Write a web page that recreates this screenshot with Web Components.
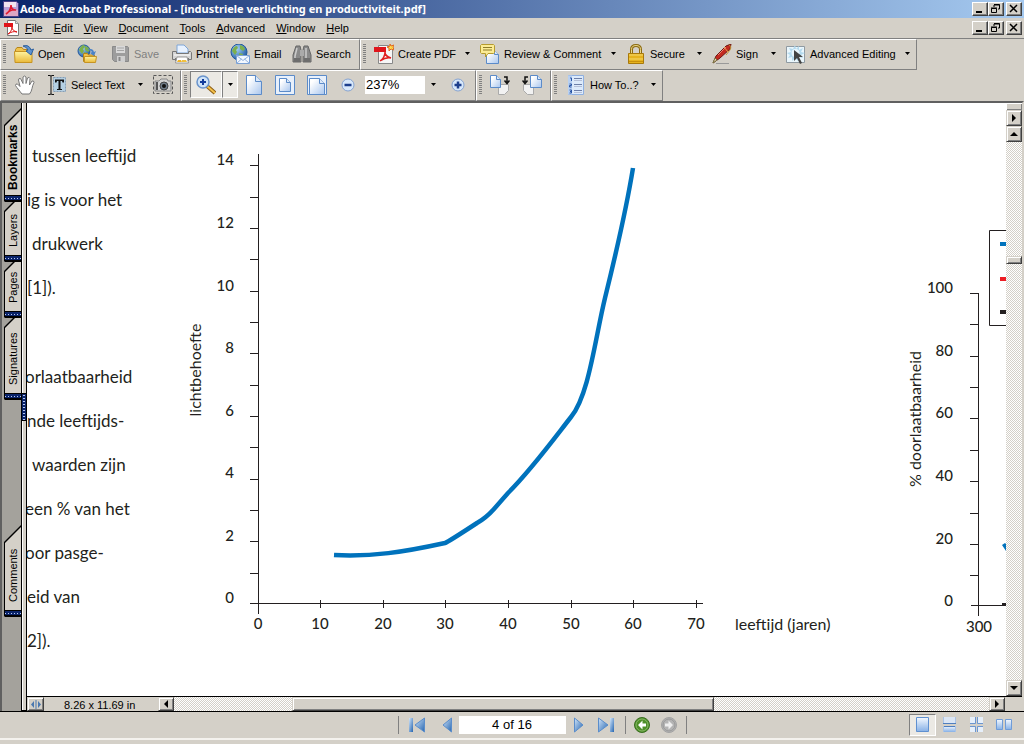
<!DOCTYPE html>
<html lang="en">
<head>
<meta charset="utf-8">
<title>Adobe Acrobat Professional - [industriele verlichting en productiviteit.pdf]</title>
<style>
html,body{margin:0;height:100%}
body{background:#d4d0c8;color:#000;font:11px/14px "Liberation Sans",Arial,sans-serif;overflow:hidden}
</style>
</head>
<body>
<acrobat-window></acrobat-window>
<script>
const define=(name,html,setup)=>customElements.define(name,class extends HTMLElement{
  connectedCallback(){
    if(this.shadowRoot)return;
    const root=this.attachShadow({mode:'open'});
    root.innerHTML=typeof html==='function'?html(this):html;
    if(setup)setup(this,root);
  }
});

/* ---------- icons ---------- */
const grads=`<defs>
<linearGradient id="pg" x1="0" y1="0" x2="1" y2="1"><stop offset=".2" stop-color="#fff"/><stop offset="1" stop-color="#a9c6ee"/></linearGradient>
<linearGradient id="bl" x1="0" y1="0" x2="1" y2="1"><stop offset="0" stop-color="#d3e6fa"/><stop offset="1" stop-color="#2565b0"/></linearGradient>
<linearGradient id="lb" x1="0" y1="0" x2="0" y2="1"><stop offset="0" stop-color="#f4f9ff"/><stop offset="1" stop-color="#86b0e6"/></linearGradient>
<linearGradient id="yl" x1="0" y1="0" x2="0" y2="1"><stop offset="0" stop-color="#fff3a0"/><stop offset="1" stop-color="#e9b93a"/></linearGradient>
<radialGradient id="gl" cx=".35" cy=".3" r=".8"><stop offset="0" stop-color="#a8d4f5"/><stop offset="1" stop-color="#14509c"/></radialGradient>
</defs>`;
const page=(x,y,w,h,f)=>`<path d="M${x} ${y}h${w-f}l${f} ${f}v${h-f}h${-w}z" fill="url(#pg)" stroke="#5b8bc9"/><path d="M${x+w-f} ${y}v${f}h${f}" fill="#dbe8f8" stroke="#5b8bc9"/>`;
const globe=(x,y,r)=>`<circle cx="${x}" cy="${y}" r="${r}" fill="url(#gl)" stroke="#22599c"/><path d="M${x-r+1} ${y-1}q2-5 5-5l1 2-2 2 1 2-2 3zM${x+1} ${y-r+1}q4 1 5 4l-2 2-3-2zM${x} ${y+1}l4 1-1 4-2 1z" fill="#7db04c"/>`;
const svgs={
app:[16,16,`<path d="M.5.5h13l2 2v13H.5z" fill="#b9a0d8" stroke="#4a3f86"/><path d="M1 1h12v5H1z" fill="#f2e4f0"/><path d="M1 9h14v6H1z" fill="#dda6c4"/><path d="M3 13c3-2 5-5 5-9 0 4 2 5 5 5-3-1-7 1-10 4z" fill="none" stroke="#e01a30" stroke-width="1.600"/>`],
pdf:[16,16,`<path d="M3.500.5h8l3 3v12h-11z" fill="#fff" stroke="#777"/><path d="M11.500.5v3h3" fill="#ddd" stroke="#999"/><path d="M0 3h9v4H0z" fill="#e0141a"/><path d="M4 14c2-1 4-4 4-7 0 3 2 4 5 5-3-1-6 0-9 2z" fill="none" stroke="#d11"/>`],
open:[20,20,`<path d="M1.500 16.500v-11l1.500-2h5l1.500 2h7v11z" fill="#f0c24c" stroke="#b58519"/><path d="M.5 7.500h17.500v11h-17z" fill="url(#yl)" stroke="#c79423"/><path d="M9 2q6-2 8 4l2.500-1-2.500 6-5-4 2-1q-1-3-5-4z" fill="#5f93cf" stroke="#2c5f9f"/>`],
web:[20,20,`${globe(7,7,6)}<path d="M6.500 17.500v-8h4l1 1.500h6v6.500z" fill="#f0c24c" stroke="#b58519"/><path d="M7.500 12.500h12l-1 6h-11z" fill="url(#yl)" stroke="#c79423"/><path d="M10 5q6-1 7 3l2-1-2 5-4-3 2-1q-1-2-5-3z" fill="#4b82c6"/>`],
save:[20,20,`<path d="M2.500 2.500h15l1 1v14h-14l-2-2z" fill="#9d9d9d" stroke="#8a8a8a"/><path d="M6 2h9v7H6z" fill="#d9d9d9"/><path d="M7 4h7M7 6.500h7" stroke="#a5a5a5"/><path d="M7 12h8v6H7z" fill="#cfcfcf"/><path d="M8.500 13h2v4h-2z" fill="#888"/>`],
print:[20,20,`<path d="M5 9V1h7l4 4v4z" fill="#e8f2ff" stroke="#7ea6d8"/><path d="M.5 7.500h4v2h12v-2h2l1 1v7h-19z" fill="#d5d5d5" stroke="#777"/><path d="M2 11h16" stroke="#fff"/><path d="M3 14h14v3H3z" fill="#777"/><path d="M5 13h10l1.500 6H3.500z" fill="#fff" stroke="#999"/><path d="M6 16h3l1 2H5z" fill="#f0b429"/><path d="M10 16h4l1 2h-5z" fill="#f0c040"/>`],
mail:[20,20,`${globe(9,8,8)}<path d="M6.500 11.500h13v8h-13z" fill="#f3f8ff" stroke="#7aa0d4"/><path d="M6.500 11.500l6.500 5 6.500-5M6.500 19.500l5-4.500M19.500 19.500l-5-4.500" fill="none" stroke="#8fb0de"/>`],
find:[20,20,`<path d="M4 2h4l1 4v12H1V11zM12 2h4l3 9v7h-8V6z" fill="#8a8a8a" stroke="#666"/><path d="M8 6h4v6H8z" fill="#aaa"/><path d="M5 4l-2 8v4M14 4v10" stroke="#ccc" fill="none" stroke-width="1.500"/><path d="M2 14h6v4H2zM12 14h6v4h-6z" fill="#6d6d6d"/>`],
create:[20,20,`<path d="M4.500 1.500h10l4 4v14h-14z" fill="#f6f6f6" stroke="#888"/><path d="M0 3h12v5H0z" fill="#df161c"/><path d="M6 17c3-2 5-5 5-9 0 4 3 5 6 6-4-1-8 1-11 3z" fill="none" stroke="#e02020" stroke-width="1.500"/><path d="M16 0l1 2 3-1-1 2 1 3-3-1-2 2v-3l-2-1 3-1z" fill="#ffd94a" stroke="#e06a20"/>`],
review:[20,20,`${page(6.5,6.5,12,13,4)}<path d="M1.500.5h12l1 1v7l-1 1H8L5.500 13V9.500h-4l-1-1v-7z" fill="#fcec94" stroke="#b59b2f"/><path d="M3 3.500h9M3 6h9" stroke="#8f7d2a"/>`],
lock:[20,20,`<path d="M5.500 10V5.500q0-4 4.500-4t4.500 4V10" fill="none" stroke="#8d6b10" stroke-width="3"/><path d="M5.500 10V5.500q0-4 4.500-4t4.500 4V10" fill="none" stroke="#e9d68a"/><path d="M2.500 9.500h15v10h-15z" fill="#e6b31e" stroke="#a8790b"/><path d="M3 11h14M3 15h14" stroke="#f6da6c"/><path d="M3 17.500h14" stroke="#c7900d"/>`],
sign:[20,20,`<path d="M4 19.500h13" stroke="#999"/><path d="M1 19l3-7L14 2l5-2-1 5L8 14z" fill="#c32a20" stroke="#6d1812"/><path d="M1 19l2-5 2 2z" fill="#f0d9b8" stroke="#774"/><path d="M12 3l4 5" stroke="#e3a64a"/><path d="M14 3l-8 8" stroke="#f08070"/><path d="M17 1q3 1 1 5l-4 5" fill="none" stroke="#c38f33"/>`],
adv:[20,20,`<path d="M.5 2.500h18v16H.5z" fill="#eaf6fc" stroke="#8f9aa2"/><path d="M9 1l1 4 3-3v4l4-2-2 4 4 1-4 2 2 3-4-1-1 4-3-3-3 3v-4l-4 1 2-3-3-2 4-1-2-4 4 1z" fill="#b4daee"/><circle cx="9.500" cy="9" r="4" fill="#eaf6fc"/><path d="M8 6v11l3-3 3 6 2-1-3-6h4z" fill="#444"/>`],
hand:[20,20,`<path d="M7 19C4 15 2 13 .5 10.500q0-2 2-1.500L5 11.500 3.500 5q0-2 2-1.500L8 8.500V2q1.500-2 3 0v6.500L12.500 3q2-1.500 2.500.5L14.500 10 17 6q2-.5 2 1.500-1.500 3-2 6-.5 3-2.500 5.500z" fill="#fff" stroke="#777"/>`],
text:[20,20,`<path d="M6 2h13v15H6z" fill="#b4cfe2"/><path d="M6.500 2.500h12v14h-12z" fill="none" stroke="#8a9db0" stroke-dasharray="2 1"/><path d="M1 .5h2q1 0 1 1 0-1 1-1h2M4 1.500v17M1 19.500h2q1 0 1-1 0 1 1 1h2" fill="none" stroke="#111"/><path d="M8 4.500h9v3h-1.500l-.5-1.500h-1.500V14H15v1h-5v-1h1.500V6H10l-.5 1.500H8z" fill="#111"/>`],
snap:[20,20,`<path d="M.5.5h19v18H.5z" fill="none" stroke="#555" stroke-dasharray="3 2"/><path d="M2 6h4l2-2h6l1 2h3v10H2z" fill="#d2d2d2" stroke="#888"/><circle cx="11" cy="11" r="4" fill="#6e7b88" stroke="#444"/><circle cx="11" cy="11" r="2" fill="#111"/><path d="M3 7h2v8H3z" fill="#555"/>`],
zoom:[20,20,`<path d="M11 11l8 7" stroke="#8a5a10" stroke-width="4"/><path d="M11 11l8 7" stroke="#f3c04a" stroke-width="2"/><circle cx="7" cy="7" r="6" fill="#cfe3f8" stroke="#6a94cc" stroke-width="1.500"/><path d="M4 7h6M7 4v6" stroke="#123c9c" stroke-width="2"/>`],
actual:[20,20,page(2.5,.5,15,19,6)],
fitpage:[20,20,`<path d="M.5.5h19v19H.5z" fill="#e8f0fb" stroke="#5b8bc9"/>${page(4.5,3.5,11,13,4)}`],
fitwidth:[20,20,`<path d="M.5.5h19v19H.5z" fill="#e8f0fb" stroke="#5b8bc9"/>${page(2.5,3.5,15,16,5)}`],
minus:[14,14,`<circle cx="7" cy="7" r="6" fill="#d8e9fb" stroke="#86a3d0"/><path d="M3.500 7h7" stroke="#1d3f8d" stroke-width="2.500"/>`],
plus:[14,14,`<circle cx="7" cy="7" r="6" fill="#d8e9fb" stroke="#86a3d0"/><path d="M3.500 7h7M7 3.500v7" stroke="#1d3f8d" stroke-width="2.500"/>`],
rotr:[20,20,`<path d="M8.500 9.500h10v6l-4 4h-6z" fill="#f2f2f2" stroke="#aaa"/>${page(.5,.5,10,12,4)}<path d="M14 2h3v5M14.500 5.500l2.500 3 2.500-3" fill="none" stroke="#111" stroke-width="1.500"/>`],
rotl:[20,20,`<path d="M1.500 9.500h10v10h-6l-4-4z" fill="#f2f2f2" stroke="#aaa"/>${page(8.5,.5,11,12,4)}<path d="M6 2H3v5M.5 5.500l2.500 3 2.500-3" fill="none" stroke="#111" stroke-width="1.500"/>`],
howto:[20,20,`<path d="M2.500.5h15v19h-15z" fill="#dceafb" stroke="#8fb0e0"/><path d="M2 .5h4v19H2z" fill="#b7d0f2"/><path d="M8 3.500h8M8 9.500h8M8 15.500h8" stroke="#6d7ea8"/><path d="M8 5.500h8M8 11.500h8M8 17.500h8" stroke="#b5bfd8"/><path d="M4 3h1.500v3M3.500 9h2v1.500h-2V12h2M3.500 15h2v3h-2M4 16.500h1" fill="none" stroke="#2a55a5"/>`],
first:[16,16,`<path d="M0 1h4v14H0z" fill="url(#bl)"/><path d="M15.500 1v14L6 8z" fill="url(#bl)" stroke="#5a8dcb"/>`],
prev:[16,16,`<path d="M12.500 1v14L4 8z" fill="url(#bl)" stroke="#5a8dcb"/>`],
next:[16,16,`<path d="M3.500 1v14L12 8z" fill="url(#bl)" stroke="#5a8dcb"/>`],
last:[16,16,`<path d="M12 1h4v14h-4z" fill="url(#bl)"/><path d="M.5 1v14L10 8z" fill="url(#bl)" stroke="#5a8dcb"/>`],
back:[16,16,`<circle cx="8" cy="8" r="7.500" fill="#4f8f2a" stroke="#3a6f20"/><circle cx="8" cy="8" r="6" fill="none" stroke="#86b766"/><path d="M8.500 3.500L4 8l4.500 4.500V9.500H12v-3H8.500z" fill="#fff"/>`],
fwd:[16,16,`<circle cx="8" cy="8" r="7.500" fill="#b4b4b4" stroke="#a2a2a2"/><circle cx="8" cy="8" r="6" fill="none" stroke="#999"/><path d="M7.500 3.500L12 8l-4.500 4.500V9.500H4v-3h3.500z" fill="#eee"/>`],
single:[16,16,`<path d="M1.500.5h12v14h-12z" fill="url(#lb)" stroke="#5f90d0"/>`],
cont:[16,16,`<path d="M1 0h13v6H1z" fill="#dbe6f5"/><path d="M1 9h13v6H1z" fill="url(#lb)"/><path d="M1 6.500h13M1 9.500h13" stroke="#4f7fc0"/><path d="M1.500 0v6M13.500 0v6M1.500 9v6M13.500 9v6" stroke="#a9c3e6"/>`],
contf:[16,16,`<path d="M1 0h5v6H1zM9 0h5v6H9zM1 9h5v6H1zM9 9h5v6H9z" fill="#e6effa"/><path d="M1 6.500h5.500V0M14 6.500H8.500V0M1 9.500h5.500V15M14 9.500H8.500V15" fill="none" stroke="#6b96d0"/>`],
facing:[16,16,`<path d="M.5 2.500h6v10h-6zM9.500 2.500h6v10h-6z" fill="url(#lb)" stroke="#6f9cd8"/>`],
split:[16,13,`<path d="M8 2v9" stroke="#4a78b0"/><path d="M6 3v7L3 6.500zM10 3v7l3-3.500z" fill="#4a78b0"/>`],
left:[8,8,`<path d="M6 0v8L2 4z"/>`],right:[8,8,`<path d="M2 0v8l4-4z"/>`],
up:[8,8,`<path d="M0 6h8L4 2z"/>`],down:[8,8,`<path d="M0 2h8L4 6z"/>`],
caret:[7,4,`<path d="M1 0h5L3.500 3z"/>`],
min:[12,10,`<path d="M2 7h6v2H2z"/>`],
rest:[12,10,`<path d="M4 .5h5.500V5H8M4 1h5.500M4 1v2M1.500 4.500h5v4h-5zM1 4h6" fill="none" stroke="#000"/>`],
close:[12,10,`<path d="M2 1l7 7M9 1l-7 7" stroke="#000" stroke-width="1.500"/>`]
};
define('ui-icon',el=>{const[w,h,s]=svgs[el.getAttribute('name')];
  return `<style>:host{display:block;flex:none}svg{display:block}</style><svg width="${w}" height="${h}" viewBox="0 0 ${w} ${h}" aria-hidden="true">${s.includes('url(')?grads:''}${s}</svg>`});

/* ---------- title and menu ---------- */
define('caption-buttons',`<style>:host{display:flex}
button{width:16px;height:14px;padding:0;margin:0;border:1px solid;border-color:#fff #404040 #404040 #fff;box-shadow:inset -1px -1px #808080;background:#d4d0c8;display:flex;align-items:center;justify-content:center}
button:last-child{margin-left:2px}</style>
<button aria-label="Minimize"><ui-icon name="min"></ui-icon></button><button aria-label="Restore"><ui-icon name="rest"></ui-icon></button><button aria-label="Close"><ui-icon name="close"></ui-icon></button>`);

define('title-bar',`<style>:host{display:flex;align-items:center;height:18px;padding:0 2px 0 3px;background:linear-gradient(90deg,#0a246a,#a6caf0);color:#fff;font:bold 11px/18px "Noto Sans",sans-serif;white-space:nowrap}
span{flex:1;padding-left:1px}</style><ui-icon name="app"></ui-icon><span><slot></slot></span><caption-buttons></caption-buttons>`);

define('menu-bar',`<style>:host{display:flex;align-items:center;height:20px;padding:0 2px 0 4px}
nav{flex:1;display:flex}
button{border:0;background:none;padding:0 6px 0 5px;margin:0;font:inherit;color:inherit;line-height:20px}</style>
<ui-icon name="pdf"></ui-icon><nav>${['File','Edit','View','Document','Tools','Advanced','Window','Help'].map(t=>`<button><u>${t[0]}</u>${t.slice(1)}</button>`).join('')}</nav><caption-buttons></caption-buttons>`);

/* ---------- toolbars ---------- */
define('tool-band',`<style>:host{display:grid;box-sizing:border-box;height:31px;align-items:center;border:solid;border-width:1px;border-color:#fff #808080 #808080 #fff;grid-template-rows:27px}
i{width:3px;height:19px;margin-left:2px;background:repeating-linear-gradient(#808080 0 1px,transparent 1px 2px)}</style><i></i><slot></slot>`);

define('tool-button',el=>`<style>:host{display:block;height:100%}
button{box-sizing:border-box;width:100%;height:100%;display:flex;align-items:center;gap:4px;padding:0;margin:0;border:0;background:none;font:inherit;color:inherit;white-space:nowrap}
:host([disabled]) button{color:#808080}
:host([pressed]) button{background:#ebe9e4;border:1px solid;border-color:#808080 #fff #fff #808080;justify-content:center}
.caret{margin-left:auto;margin-right:var(--caret-end,9px)}
:host([pressed]) .caret{margin:0}</style>
<button ${el.hasAttribute('disabled')?'disabled':''} aria-label="${el.getAttribute('label')||el.textContent}">${el.getAttribute('icon')?`<ui-icon name="${el.getAttribute('icon')}"></ui-icon>`:''}${el.textContent?'<slot></slot>':''}${el.hasAttribute('menu')?'<ui-icon class="caret" name="caret"></ui-icon>':''}</button>`);

define('tool-area',`<style>:host{display:block;border-top:1px solid #808080;font-size:11px}
.row{display:flex;height:31px}
.files{grid-template-columns:13px 63px 33px 62px 58px 62px 67px}
.tasks{grid-template-columns:13px 106px 146px 86px 74px 130px}
.basic{grid-template-columns:14px 32px 106px 27px}
.zoom{grid-template-columns:8px 32px 16px 6px 31px 32px 34px 24px 60px 18px 32px}
.rotate{grid-template-columns:13px 32px 28px}
.help{grid-template-columns:14px 96px}
.help tool-button,.last{--caret-end:5px}
input{box-sizing:border-box;width:60px;height:18px;border:0;padding:0 1px;margin:0;font:13px/18px "Liberation Sans",sans-serif;background:#fff}
</style>
<div class="row"><tool-band class="files">
<tool-button icon="open">Open</tool-button><tool-button icon="web" label="Open web page"></tool-button><tool-button icon="save" disabled>Save</tool-button><tool-button icon="print">Print</tool-button><tool-button icon="mail">Email</tool-button><tool-button icon="find">Search</tool-button></tool-band>
<tool-band class="tasks"><tool-button icon="create" menu>Create PDF</tool-button><tool-button icon="review" menu>Review &amp; Comment</tool-button><tool-button icon="lock" menu>Secure</tool-button><tool-button icon="sign" menu>Sign</tool-button><tool-button class="last" icon="adv" menu>Advanced Editing</tool-button></tool-band></div>
<div class="row"><tool-band class="basic"><tool-button icon="hand" label="Hand tool"></tool-button><tool-button icon="text" menu>Select Text</tool-button><tool-button icon="snap" label="Snapshot"></tool-button></tool-band>
<tool-band class="zoom"><tool-button icon="zoom" pressed label="Zoom in tool"></tool-button><tool-button pressed menu label="Zoom tools"></tool-button><span></span><tool-button icon="actual" label="Actual size"></tool-button><tool-button icon="fitpage" label="Fit page"></tool-button><tool-button icon="fitwidth" label="Fit width"></tool-button><tool-button icon="minus" label="Zoom out"></tool-button><input aria-label="Zoom" value="237%"><tool-button menu label="Zoom levels" style="--caret-end:6px"></tool-button><tool-button icon="plus" label="Zoom in" style="padding-left:8px"></tool-button></tool-band>
<tool-band class="rotate"><tool-button icon="rotr" label="Rotate clockwise"></tool-button><tool-button icon="rotl" label="Rotate counterclockwise"></tool-button></tool-band>
<tool-band class="help"><tool-button icon="howto" menu>How To..?</tool-button></tool-band></div>`);

/* ---------- navigation tabs ---------- */
define('nav-tab',`<style>:host{display:block;position:relative;width:17px;margin-top:-8px}
button{all:unset;box-sizing:border-box;display:block;width:17px;height:100%;background:#000;clip-path:polygon(0 17px,17px 0,17px 100%,1px 100%,0 calc(100% - 1px));position:relative;font:inherit}
button::before{content:"";position:absolute;inset:0 0 2px 1px;background:#d4d0c8;clip-path:polygon(0 18px,16px 2px,16px 100%,0 100%)}
button::after{content:"";position:absolute;left:1px;right:0;bottom:2px;height:5px;background:radial-gradient(circle,#b8c8f0 0 1px,transparent 1px) 2px 0/3px 5px,#0a246a;border-top:1px solid #000;box-sizing:border-box}
span{position:absolute;inset:0 0 15px 2px;writing-mode:vertical-rl;transform:rotate(180deg);line-height:14px;white-space:nowrap}
:host([current]) span{font-weight:bold;font-size:12px;bottom:12px}</style><button role="tab"><span><slot></slot></span></button>`);

define('nav-strip',`<style>:host{box-sizing:border-box;display:flex;flex-direction:column;width:19px;background:#a4a29c;padding:5px 0 94px 2px}
div{flex:1}</style><slot></slot><div></div><slot name="end"></slot>`);
define('pane-splitter',`<style>:host{box-sizing:border-box;display:block;width:6px;background:#d4d0c8;border:solid #000;border-width:0 1px 1px;box-shadow:inset 1px 0 #fff;padding-top:290px}
div{height:26px;background:radial-gradient(circle,#b8c8f0 0 1px,transparent 1px) 0 0/4px 3px,#0a246a;border-top:1px solid #000;border-bottom:1px solid #000}</style><div></div>`);

/* ---------- page content ---------- */
define('page-text',`<style>:host{display:block;width:153px;flex:none;overflow:hidden;font:17px/44px Lato,"Open Sans",sans-serif;color:#231f20;padding-top:31px;white-space:nowrap;box-sizing:border-box}
p{margin:0 0 45px}span{display:block}.in{padding-left:5px}.cut{margin-left:-2px}</style>
<p><span class="in">tussen leeftijd</span><span>ig is voor het</span><span class="in">drukwerk</span><span>[1]).</span></p>
<p><span class="cut">orlaatbaarheid</span><span>nde leeftijds-</span><span class="in">waarden zijn</span><span class="cut">een % van het</span><span class="cut">oor pasge-</span><span>eid van</span><span>2]).</span></p>`);

const chartStyle=`<style>:host{display:block;flex:none}svg{display:block}text{font:500 15px Lato,"Open Sans",sans-serif;fill:#231f20}.name{font-size:16px;font-weight:400}.axis{stroke:#231f20;fill:none}</style>`;
define('light-chart',()=>{
  const ys=[603,573,541,510,479,447,416,385,353,322,291,259,228,197,165], xs=[258,320,383,445,508,571,633,696];
  return chartStyle+`<svg width="680" height="593" viewBox="180 103 680 593" role="img" aria-label="lichtbehoefte / leeftijd">
<path class="axis" d="M258.500 154v460M250 603.500h453${ys.slice(1).map(y=>`M250 ${y}.500h8`).join('')}${xs.slice(1).map(x=>`M${x}.500 600v8`).join('')}"/>
${[0,2,4,6,8,10,12,14].map((v,i)=>`<text x="234" y="${[603,541,478,416,353,291,228,165][i]}" text-anchor="end">${v}</text>`).join('')}
${xs.map((x,i)=>`<text x="${x}" y="629" text-anchor="middle">${i?i*10:0}</text>`).join('')}
<text class="name" x="735" y="630">leeftijd (jaren)</text><text class="name" text-anchor="middle" transform="translate(201 370) rotate(-90)">lichtbehoefte</text>
<path d="M334 555C372 557 404 552 445 543Q448 542 477 523Q486 518 494 509L508 493C531 470 550 444 571 417C589 395 595 339 605 298Q625 217 633 168" fill="none" stroke="#0072bc" stroke-width="4.500"/></svg>`});
define('transmission-chart',()=>{
  const ys=[293,324,356,387,418,450,481,513,544,575];
  return chartStyle+`<svg width="106" height="593" viewBox="900 103 106 593" role="img" aria-label="% doorlaatbaarheid">
<path class="axis" d="M978.500 293v323M971 605.500h35${ys.map(y=>`M970 ${y}.500h8`).join('')}M1006 230.500h-16.500v95h16.500"/>
${[100,80,60,40,20,0].map((v,i)=>`<text x="953" y="${[293,356,418,481,544,606][i]}" text-anchor="end">${v}</text>`).join('')}
<text x="979" y="632" text-anchor="middle">300</text><text class="name" text-anchor="middle" transform="translate(921 419) rotate(-90)">% doorlaatbaarheid</text>
<path d="M1000 242h6v4h-6zM1002 545l3-2 1 1v7z" fill="#0072bc"/><path d="M1000 277h6v4h-6z" fill="#ed1c24"/><path d="M1000 310h6v4h-6zM1002 603h4v3h-4z" fill="#231f20"/></svg>`});
define('page-view',`<style>:host{display:flex;min-width:0;background:#fff;overflow:hidden}transmission-chart{margin-left:auto}</style><page-text></page-text><light-chart></light-chart><transmission-chart></transmission-chart>`);

/* ---------- scroll bars ---------- */
const scrollCss=`button,.thumb,.box{box-sizing:border-box;padding:0;margin:0;border:1px solid;border-color:#d4d0c8 #404040 #404040 #d4d0c8;box-shadow:inset 1px 1px #fff,inset -1px -1px #808080;background:#d4d0c8;display:flex;align-items:center;justify-content:center;flex:none}
.trough{background:repeating-conic-gradient(#fff 0 25%,#d4d0c8 0 50%) 0 0/2px 2px}`;
define('v-scroll',`<style>:host{display:flex;flex-direction:column;width:16px}${scrollCss}button{width:16px;height:16px}.box{height:7px;border:0}.a{height:114px}.thumb{height:8px}.b{flex:1}</style>
<div class="box"></div><button aria-label="Next view"><ui-icon name="right"></ui-icon></button><button aria-label="Scroll up"><ui-icon name="up"></ui-icon></button><div class="trough a"></div><div class="thumb"></div><div class="trough b"></div><button aria-label="Scroll down"><ui-icon name="down"></ui-icon></button>`);
define('h-scroll',`<style>:host{box-sizing:border-box;display:flex;height:15px;border-top:1px solid #000;padding-right:17px;background:#d4d0c8}${scrollCss}button{width:16px;height:14px}
.size{width:114px;box-sizing:border-box;padding-left:20px;line-height:16px}.a{flex:119}.thumb{flex:422}.b{flex:276}.trough,.thumb{height:14px}</style>
<button aria-label="Resize pane" style="width:17px"><ui-icon name="split"></ui-icon></button><div class="size">8.26 x 11.69 in</div><button aria-label="Scroll left"><ui-icon name="left"></ui-icon></button><div class="trough a"></div><div class="thumb"></div><div class="trough b"></div><button aria-label="Scroll right"><ui-icon name="right"></ui-icon></button>`);

/* ---------- status bar ---------- */
define('status-bar',`<style>:host{display:grid;grid-template-columns:1fr auto 1fr;align-items:center;height:26px;padding:0 7px 0 67px;border-top:1px solid #000;border-bottom:2px solid #f4f2ee;margin-bottom:4px}
div{display:flex;align-items:center}
.nav{grid-column:2}
hr{width:1px;height:18px;margin:0;border:0;background:#808080}
button{box-sizing:border-box;padding:0;margin:0;border:0;background:none;display:flex;justify-content:center;align-items:center;width:27px;height:22px}
.modes{justify-self:end}
.on{border:1px solid;border-color:#808080 #fff #fff #808080;background:#ebe9e4}
input{box-sizing:border-box;width:107px;height:18px;border:0;margin:0;padding:0;text-align:center;font:13px/18px "Liberation Sans",sans-serif}</style>
<div class="nav"><hr><button aria-label="First page" style="width:36px"><ui-icon name="first"></ui-icon></button><button aria-label="Previous page" style="width:24px"><ui-icon name="prev"></ui-icon></button><input aria-label="Page" value="4 of 16"><button aria-label="Next page"><ui-icon name="next"></ui-icon></button><button aria-label="Last page"><ui-icon name="last"></ui-icon></button><span style="width:5px"></span><hr><span style="width:3px"></span><button aria-label="Previous view"><ui-icon name="back"></ui-icon></button><button aria-label="Next view"><ui-icon name="fwd"></ui-icon></button><span style="width:3px"></span><hr></div>
<div class="modes"><button class="on" aria-label="Single page"><ui-icon name="single"></ui-icon></button><button aria-label="Continuous"><ui-icon name="cont"></ui-icon></button><button aria-label="Continuous facing"><ui-icon name="contf"></ui-icon></button><button aria-label="Facing"><ui-icon name="facing"></ui-icon></button></div>`);

/* ---------- window ---------- */
define('acrobat-window',`<style>:host{display:flex;flex-direction:column;height:100vh}
main{flex:1;min-height:0;display:flex;border:solid;border-width:2px 2px 0;border-color:#606060 #d4d0c8 #505050 #606060}
.doc{flex:1;min-width:0;display:flex;flex-direction:column}
.view{flex:1;min-height:0;display:flex}
page-view{flex:1}
nav-tab:nth-of-type(1){z-index:4;margin-top:0}nav-tab:nth-of-type(2){z-index:3}nav-tab:nth-of-type(3){z-index:2}</style>
<title-bar>Adobe Acrobat Professional - [industriele verlichting en productiviteit.pdf]</title-bar>
<menu-bar></menu-bar><tool-area></tool-area>
<main><nav-strip role="tablist"><nav-tab current style="height:94px">Bookmarks</nav-tab><nav-tab style="height:68px">Layers</nav-tab><nav-tab style="height:64px">Pages</nav-tab><nav-tab style="height:90px">Signatures</nav-tab><nav-tab slot="end" style="height:92px">Comments</nav-tab></nav-strip>
<pane-splitter></pane-splitter>
<div class="doc"><div class="view"><page-view></page-view><v-scroll></v-scroll></div><h-scroll></h-scroll></div></main>
<status-bar></status-bar>`);
</script>
</body>
</html>
